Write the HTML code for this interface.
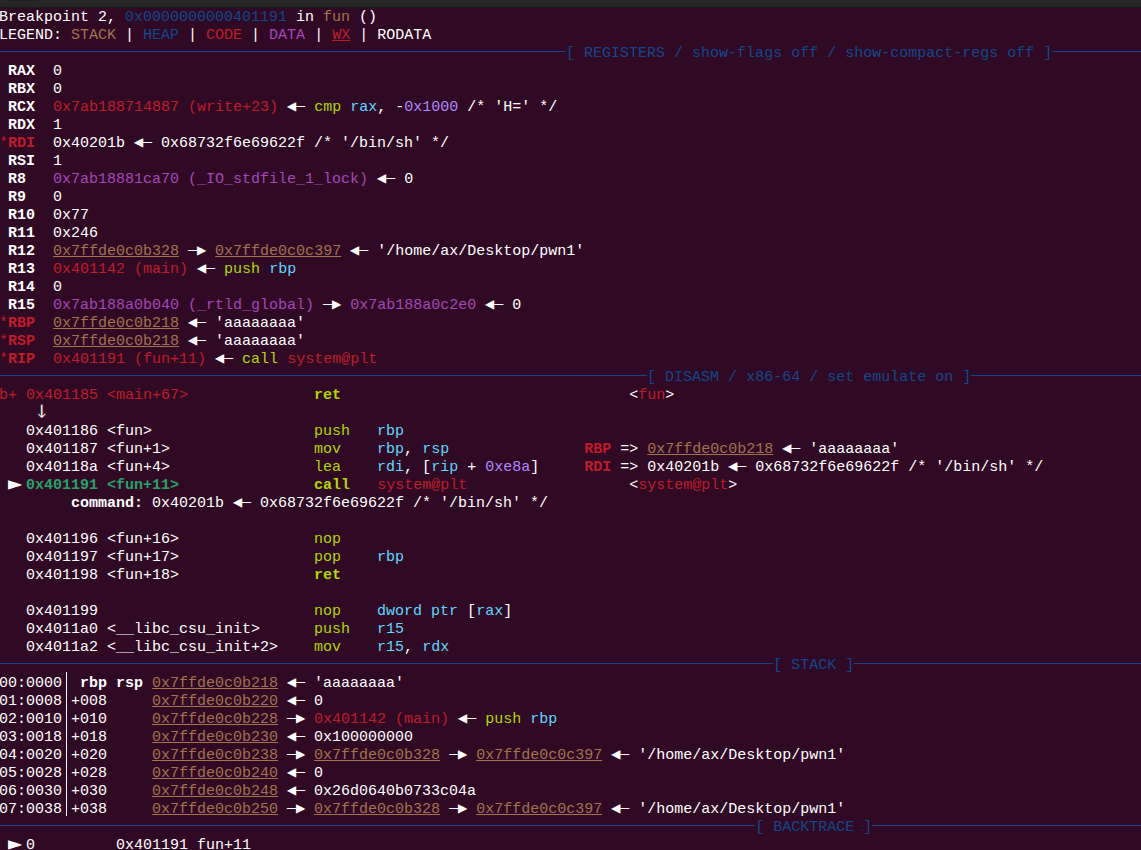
<!DOCTYPE html>
<html lang="en">
<head>
<meta charset="utf-8">
<title>pwndbg</title>
<style>
html,body{margin:0;padding:0;}
body{width:1141px;height:850px;overflow:hidden;background:#300a24;position:relative;}
.bar{position:absolute;left:0;top:0;width:1141px;height:7px;background:#262626;border-bottom:1px solid #21171f;}
.tab{position:absolute;left:8px;top:0;width:28px;height:1px;background:#1f1f1f;}
.term{position:absolute;left:-1px;top:9px;width:1160px;height:841px;overflow:hidden;
  font-family:"Liberation Mono","DejaVu Sans Mono",monospace;font-size:15px;line-height:18px;color:#fff;}
.l{height:18px;white-space:pre;overflow:visible;}
.b{color:#12488b}.y{color:#a2734c}.r{color:#c01c28}.m{color:#a347ba}.g{color:#26a269}
.mn{color:#afd700}.rg{color:#5fd7ff}.nm{color:#af87ff}
.B{font-weight:bold}
.u{text-decoration:underline;text-underline-offset:1px;text-decoration-thickness:1px}
i{font-style:normal}
.hl{position:relative;top:-1px}
.al,.ar{display:inline-block;width:18px;height:18px;vertical-align:top;position:relative;overflow:visible}
.al i,.ar i{position:absolute;display:block;height:18px;text-align:center}
.t{width:30px;margin-left:-15px;top:-3px;font:23.5px/18px "DejaVu Sans Mono",monospace}
.d{width:9px;top:-1px;overflow:visible}
.al .t{left:4.5px}.al .d{left:9px}
.ar .d{left:0}.ar .t{left:13.5px}
.tri,.dn,.vb{display:inline-block;width:9px;height:18px;vertical-align:top;position:relative}
.tri i{position:absolute;left:0;top:-3px;display:block;font:23.5px/18px "DejaVu Sans Mono",monospace}
.dn i{position:absolute;left:6.6px;width:30px;margin-left:-15px;text-align:center;top:-4px;display:block;font:25px/18px "DejaVu Sans Mono",monospace;-webkit-text-stroke:0.5px #300a24}
.vb{color:transparent}
.vb::before{content:"";position:absolute;left:4px;top:-3px;width:1px;height:18px;background:#fff}
</style>
</head>
<body>
<div class="bar"></div><div class="tab"></div>
<div class="term">
<div class="l">Breakpoint 2, <span class="b">0x0000000000401191</span> in <span class="y">fun</span> ()</div>
<div class="l">LEGEND: <span class="y">STACK</span> | <span class="b">HEAP</span> | <span class="r">CODE</span> | <span class="m">DATA</span> | <span class="r u">WX</span> | RODATA</div>
<div class="l b"><span class="hl">───────────────────────────────────────────────────────────────</span>[ REGISTERS / show-flags off / show-compact-regs off ]<span class="hl">───────────</span></div>
<div class="l"> <span class="B">RAX</span>  0</div>
<div class="l"> <span class="B">RBX</span>  0</div>
<div class="l"> <span class="B">RCX</span>  <span class="r">0x7ab188714887 (write+23)</span> <span class="al"><i class="t">◂</i><i class="d">—</i></span> <span class="mn">cmp</span> <span class="rg">rax</span>, -<span class="nm">0x1000</span> /* 'H=' */</div>
<div class="l"> <span class="B">RDX</span>  1</div>
<div class="l"><span class="r">*</span><span class="r B">RDI</span>  0x40201b <span class="al"><i class="t">◂</i><i class="d">—</i></span> 0x68732f6e69622f /* '/bin/sh' */</div>
<div class="l"> <span class="B">RSI</span>  1</div>
<div class="l"> <span class="B">R8</span>   <span class="m">0x7ab18881ca70 (_IO_stdfile_1_lock)</span> <span class="al"><i class="t">◂</i><i class="d">—</i></span> 0</div>
<div class="l"> <span class="B">R9</span>   0</div>
<div class="l"> <span class="B">R10</span>  0x77</div>
<div class="l"> <span class="B">R11</span>  0x246</div>
<div class="l"> <span class="B">R12</span>  <span class="y u">0x7ffde0c0b328</span> <span class="ar"><i class="d">—</i><i class="t">▸</i></span> <span class="y u">0x7ffde0c0c397</span> <span class="al"><i class="t">◂</i><i class="d">—</i></span> '/home/ax/Desktop/pwn1'</div>
<div class="l"> <span class="B">R13</span>  <span class="r">0x401142 (main)</span> <span class="al"><i class="t">◂</i><i class="d">—</i></span> <span class="mn">push</span> <span class="rg">rbp</span></div>
<div class="l"> <span class="B">R14</span>  0</div>
<div class="l"> <span class="B">R15</span>  <span class="m">0x7ab188a0b040 (_rtld_global)</span> <span class="ar"><i class="d">—</i><i class="t">▸</i></span> <span class="m">0x7ab188a0c2e0</span> <span class="al"><i class="t">◂</i><i class="d">—</i></span> 0</div>
<div class="l"><span class="r">*</span><span class="r B">RBP</span>  <span class="y u">0x7ffde0c0b218</span> <span class="al"><i class="t">◂</i><i class="d">—</i></span> 'aaaaaaaa'</div>
<div class="l"><span class="r">*</span><span class="r B">RSP</span>  <span class="y u">0x7ffde0c0b218</span> <span class="al"><i class="t">◂</i><i class="d">—</i></span> 'aaaaaaaa'</div>
<div class="l"><span class="r">*</span><span class="r B">RIP</span>  <span class="r">0x401191 (fun+11)</span> <span class="al"><i class="t">◂</i><i class="d">—</i></span> <span class="mn">call</span> <span class="r">system@plt</span></div>
<div class="l b"><span class="hl">────────────────────────────────────────────────────────────────────────</span>[ DISASM / x86-64 / set emulate on ]<span class="hl">────────────────────</span></div>
<div class="l"><span class="r">b+ 0x401185 &lt;main+67&gt;</span>              <span class="mn B">ret</span>                                &lt;<span class="r">fun</span>&gt;</div>
<div class="l">    <span class="dn"><i>↓</i></span></div>
<div class="l">   0x401186 &lt;fun&gt;                  <span class="mn">push</span>   <span class="rg">rbp</span></div>
<div class="l">   0x401187 &lt;fun+1&gt;                <span class="mn">mov</span>    <span class="rg">rbp</span>, <span class="rg">rsp</span>               <span class="r B">RBP</span> =&gt; <span class="y u">0x7ffde0c0b218</span> <span class="al"><i class="t">◂</i><i class="d">—</i></span> 'aaaaaaaa'</div>
<div class="l">   0x40118a &lt;fun+4&gt;                <span class="mn">lea</span>    <span class="rg">rdi</span>, [<span class="rg">rip</span> + <span class="nm">0xe8a</span>]     <span class="r B">RDI</span> =&gt; 0x40201b <span class="al"><i class="t">◂</i><i class="d">—</i></span> 0x68732f6e69622f /* '/bin/sh' */</div>
<div class="l"> <span class="tri"><i>►</i></span> <span class="g B">0x401191 &lt;fun+11&gt;</span>               <span class="mn B">call</span>   <span class="r">system@plt</span>                  &lt;<span class="r">system@plt</span>&gt;</div>
<div class="l">        <span class="B">command:</span> 0x40201b <span class="al"><i class="t">◂</i><i class="d">—</i></span> 0x68732f6e69622f /* '/bin/sh' */</div>
<div class="l"></div>
<div class="l">   0x401196 &lt;fun+16&gt;               <span class="mn">nop</span></div>
<div class="l">   0x401197 &lt;fun+17&gt;               <span class="mn">pop</span>    <span class="rg">rbp</span></div>
<div class="l">   0x401198 &lt;fun+18&gt;               <span class="mn B">ret</span></div>
<div class="l"></div>
<div class="l">   0x401199                        <span class="mn">nop</span>    <span class="rg">dword ptr</span> [<span class="rg">rax</span>]</div>
<div class="l">   0x4011a0 &lt;__libc_csu_init&gt;      <span class="mn">push</span>   <span class="rg">r15</span></div>
<div class="l">   0x4011a2 &lt;__libc_csu_init+2&gt;    <span class="mn">mov</span>    <span class="rg">r15</span>, <span class="rg">rdx</span></div>
<div class="l b"><span class="hl">──────────────────────────────────────────────────────────────────────────────────────</span>[ STACK ]<span class="hl">─────────────────────────────────</span></div>
<div class="l">00:0000<span class="vb">│</span> <span class="B">rbp rsp</span> <span class="y u">0x7ffde0c0b218</span> <span class="al"><i class="t">◂</i><i class="d">—</i></span> 'aaaaaaaa'</div>
<div class="l">01:0008<span class="vb">│</span>+008     <span class="y u">0x7ffde0c0b220</span> <span class="al"><i class="t">◂</i><i class="d">—</i></span> 0</div>
<div class="l">02:0010<span class="vb">│</span>+010     <span class="y u">0x7ffde0c0b228</span> <span class="ar"><i class="d">—</i><i class="t">▸</i></span> <span class="r">0x401142 (main)</span> <span class="al"><i class="t">◂</i><i class="d">—</i></span> <span class="mn">push</span> <span class="rg">rbp</span></div>
<div class="l">03:0018<span class="vb">│</span>+018     <span class="y u">0x7ffde0c0b230</span> <span class="al"><i class="t">◂</i><i class="d">—</i></span> 0x100000000</div>
<div class="l">04:0020<span class="vb">│</span>+020     <span class="y u">0x7ffde0c0b238</span> <span class="ar"><i class="d">—</i><i class="t">▸</i></span> <span class="y u">0x7ffde0c0b328</span> <span class="ar"><i class="d">—</i><i class="t">▸</i></span> <span class="y u">0x7ffde0c0c397</span> <span class="al"><i class="t">◂</i><i class="d">—</i></span> '/home/ax/Desktop/pwn1'</div>
<div class="l">05:0028<span class="vb">│</span>+028     <span class="y u">0x7ffde0c0b240</span> <span class="al"><i class="t">◂</i><i class="d">—</i></span> 0</div>
<div class="l">06:0030<span class="vb">│</span>+030     <span class="y u">0x7ffde0c0b248</span> <span class="al"><i class="t">◂</i><i class="d">—</i></span> 0x26d0640b0733c04a</div>
<div class="l">07:0038<span class="vb">│</span>+038     <span class="y u">0x7ffde0c0b250</span> <span class="ar"><i class="d">—</i><i class="t">▸</i></span> <span class="y u">0x7ffde0c0b328</span> <span class="ar"><i class="d">—</i><i class="t">▸</i></span> <span class="y u">0x7ffde0c0c397</span> <span class="al"><i class="t">◂</i><i class="d">—</i></span> '/home/ax/Desktop/pwn1'</div>
<div class="l b"><span class="hl">────────────────────────────────────────────────────────────────────────────────────</span>[ BACKTRACE ]<span class="hl">───────────────────────────────</span></div>
<div class="l"> <span class="tri"><i>►</i></span> 0         0x401191 fun+11</div>
</div>
</body>
</html>
